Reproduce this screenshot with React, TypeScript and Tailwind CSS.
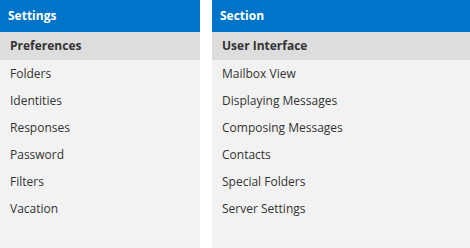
import React from "react";

const left = ["Folders", "Identities", "Responses", "Password", "Filters", "Vacation"];
const right = ["Mailbox View", "Displaying Messages", "Composing Messages", "Contacts", "Special Folders", "Server Settings"];

function Panel({ title, selected, items, className }: { title: string; selected: string; items: string[]; className: string }) {
  return (
    <div className={`flex flex-col bg-[#f2f2f2] ${className}`}>
      <div className="h-[32px] bg-[#0074c8] text-white font-bold text-[12px] flex items-center px-[8px]">{title}</div>
      <div className="h-[28px] bg-[#dddddd] text-[#333333] font-bold text-[12px] flex items-center px-[10px]">{selected}</div>
      {items.map((it) => (
        <div key={it} className="h-[27px] text-[#333333] text-[12px] flex items-center px-[10px]">{it}</div>
      ))}
    </div>
  );
}

export default function App() {
  return (
    <div className="w-[470px] h-[248px] bg-white flex gap-[12px]" style={{ fontFamily: '"Open Sans", sans-serif' }}>
      <Panel title="Settings" selected="Preferences" items={left} className="w-[200px]" />
      <Panel title="Section" selected="User Interface" items={right} className="flex-1" />
    </div>
  );
}
